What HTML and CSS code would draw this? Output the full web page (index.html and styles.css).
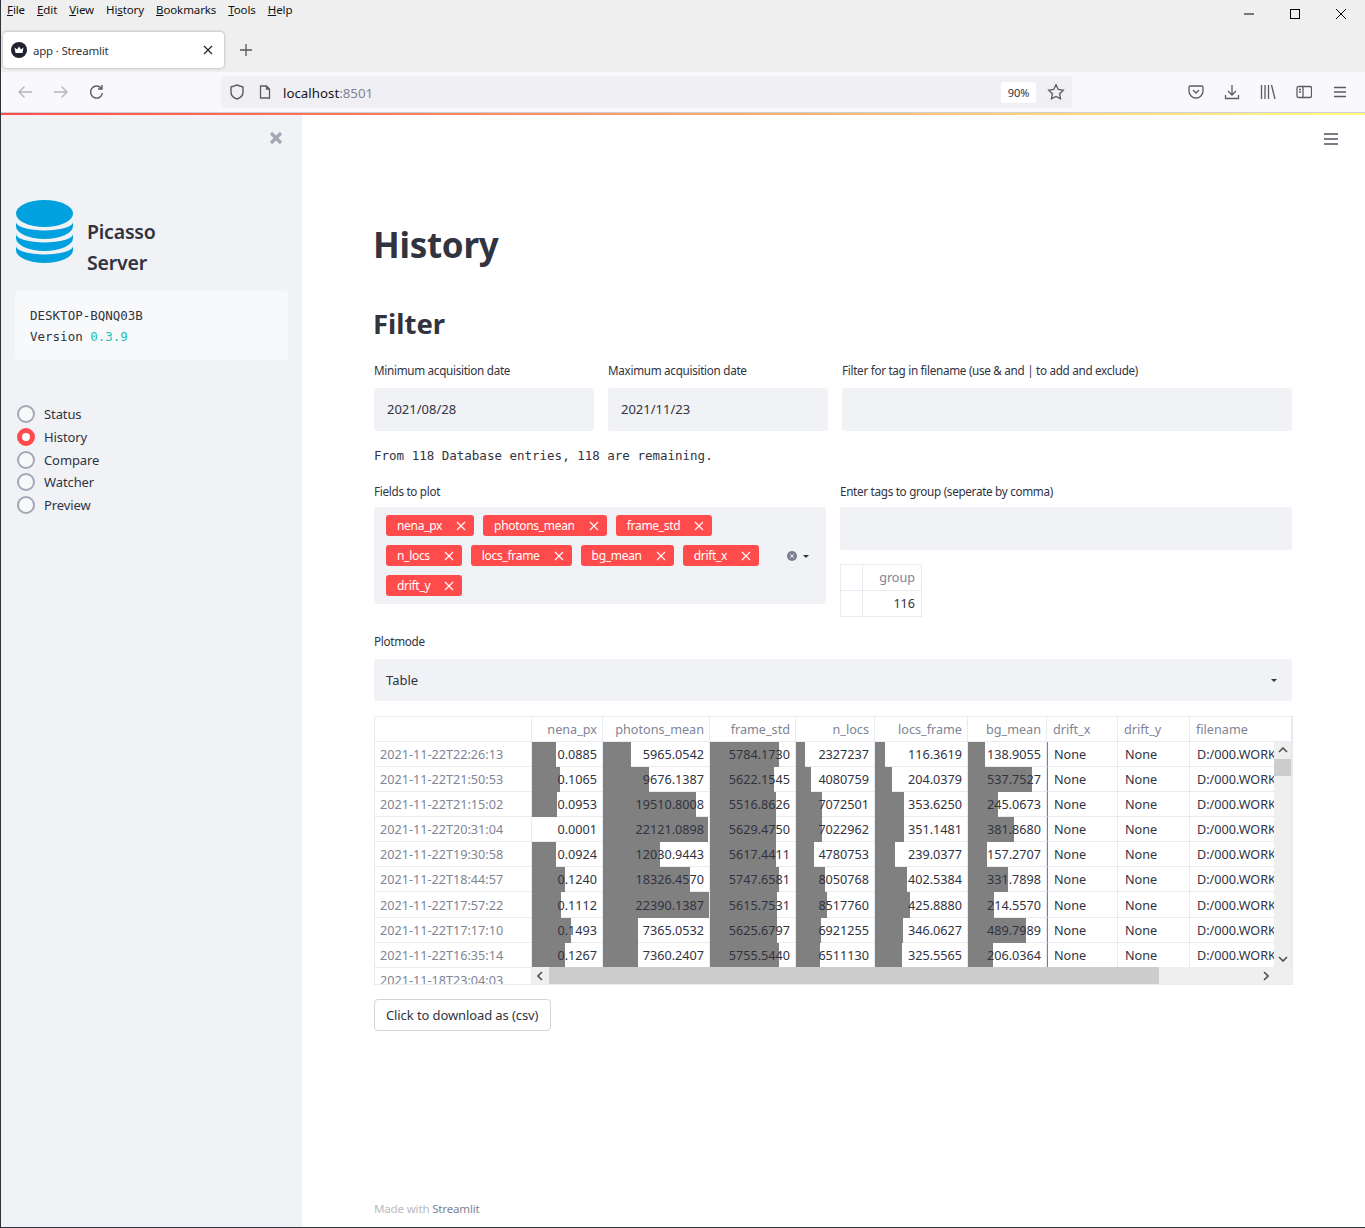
FILE: index.html
```html
<!DOCTYPE html>
<html lang="en">
<head>
    <meta charset="UTF-8">
    <title>app · Streamlit</title>
    <link rel="stylesheet" href="styles.css">
</head>
<body>
<div class="window">
    <!-- Browser chrome -->
    <div class="titlebar">
        <nav class="menu">
            <span><u>F</u>ile</span>
            <span><u>E</u>dit</span>
            <span><u>V</u>iew</span>
            <span>Hi<u>s</u>tory</span>
            <span><u>B</u>ookmarks</span>
            <span><u>T</u>ools</span>
            <span><u>H</u>elp</span>
        </nav>
        <div class="win-buttons">
            <svg width="12" height="12" viewBox="0 0 12 12"><path d="M1 6h10" stroke="#000" fill="none"/></svg>
            <svg width="12" height="12" viewBox="0 0 12 12"><rect x="1.5" y="1.5" width="9" height="9" stroke="#000" fill="none"/></svg>
            <svg width="12" height="12" viewBox="0 0 12 12"><path d="M1 1l10 10M11 1L1 11" stroke="#000" fill="none"/></svg>
        </div>
    </div>
    <div class="tabbar">
        <div class="tab">
            <svg class="favicon" width="16" height="16" viewBox="0 0 16 16"><circle cx="8" cy="8" r="8" fill="#20232f"/><path d="M3.5 5.5l2.500 2 2-3 2 3 2.500-2-1 5.500h-7z" fill="#fff"/></svg>
            <span class="tab-title">app · Streamlit</span>
            <svg width="10" height="10" viewBox="0 0 10 10"><path d="M1 1l8 8M9 1L1 9" stroke="#222" stroke-width="1.200" fill="none"/></svg>
        </div>
        <svg class="new-tab" width="14" height="14" viewBox="0 0 14 14"><path d="M7 1v12M1 7h12" stroke="#555" stroke-width="1.300" fill="none"/></svg>
    </div>
    <div class="toolbar">
        <div class="nav-icons">
            <svg width="16" height="16" viewBox="0 0 16 16"><path d="M15 8H2M7.500 2.500L2 8l5.500 5.500" stroke="#b4b4b8" stroke-width="1.300" fill="none"/></svg>
            <svg width="16" height="16" viewBox="0 0 16 16"><path d="M1 8h13M8.500 2.500L14 8l-5.500 5.500" stroke="#b4b4b8" stroke-width="1.300" fill="none"/></svg>
            <svg width="16" height="16" viewBox="0 0 16 16"><path d="M13.500 9a6 6 0 1 1-1.500-5M13 1v4H9" stroke="#5b5b66" stroke-width="1.400" fill="none"/></svg>
        </div>
        <div class="urlbar">
            <svg class="shield" width="16" height="16" viewBox="0 0 16 16"><path d="M8 1l6 2v5c0 3.500-3 6-6 7-3-1-6-3.500-6-7V3z" stroke="#5b5b66" stroke-width="1.400" fill="none"/></svg>
            <svg class="page" width="14" height="14" viewBox="0 0 14 14"><path d="M2.500 1h6l3 3v9h-9zM8.500 1v3h3" stroke="#5b5b66" stroke-width="1.300" fill="none"/></svg>
            <span class="url">localhost<span class="url-port">:8501</span></span>
            <span class="zoom-pill">90%</span>
            <svg class="star" width="18" height="18" viewBox="0 0 18 18"><path d="M9 1.800l2.200 4.700 5.100.7-3.700 3.500.9 5.100L9 13.400l-4.500 2.400.9-5.100-3.700-3.500 5.100-.7z" stroke="#5b5b66" stroke-width="1.300" fill="none"/></svg>
        </div>
        <div class="tool-icons">
            <svg width="16" height="16" viewBox="0 0 16 16"><path d="M2.500 2h11A1.500 1.500 0 0 1 15 3.500V7a7 7 0 0 1-14 0V3.500A1.500 1.500 0 0 1 2.500 2zM5 6l3 3 3-3" stroke="#5b5b66" stroke-width="1.300" fill="none"/></svg>
            <svg width="16" height="16" viewBox="0 0 16 16"><path d="M8 1v9.500M4 7l4 4 4-4M1.500 11v3.500h13V11" stroke="#5b5b66" stroke-width="1.300" fill="none"/></svg>
            <svg width="16" height="16" viewBox="0 0 16 16"><path d="M1.500 1v14M5 1v14M8.500 1v14M11.500 1l3.500 14" stroke="#5b5b66" stroke-width="1.300" fill="none"/></svg>
            <svg width="16" height="16" viewBox="0 0 16 16"><rect x="1" y="2.500" width="14.500" height="11" rx="1.500" stroke="#5b5b66" stroke-width="1.300" fill="none"/><path d="M7 2.500v11M3 5.500h2M3 8h2" stroke="#5b5b66" stroke-width="1.300" fill="none"/></svg>
            <svg width="16" height="16" viewBox="0 0 16 16"><path d="M2 3.500h12M2 8h12M2 12.500h12" stroke="#5b5b66" stroke-width="1.300" fill="none"/></svg>
        </div>
    </div>
    <div class="decoration"></div>

    <div class="app">
        <!-- Sidebar -->
        <aside class="sidebar">
            <svg class="side-close" width="14" height="14" viewBox="0 0 14 14"><path d="M2 2l10 10M12 2L2 12" stroke="#a3a8b4" stroke-width="3.200" fill="none"/></svg>
            <div class="brand">
                <svg class="logo" width="57" height="63" viewBox="0 0 57 63">
                    <ellipse cx="28.500" cy="13.500" rx="28.500" ry="13.500" fill="#00a1de"/>
                    <path d="M0 22A28.500 8.500 0 0 0 57 22V26A28.500 13 0 0 1 0 26z" fill="#00a1de"/>
                    <path d="M0 34A28.500 8.500 0 0 0 57 34V38A28.500 13 0 0 1 0 38z" fill="#00a1de"/>
                    <path d="M0 46A28.500 8.500 0 0 0 57 46V50A28.500 13 0 0 1 0 50z" fill="#00a1de"/>
                </svg>
                <div class="brand-name">Picasso<br>Server</div>
            </div>
            <div class="info-box">
                <div>DESKTOP-BQNQ03B</div>
                <div>Version <span class="teal">0.3.9</span></div>
            </div>
            <ul class="radios">
                <li><span class="radio"></span>Status</li>
                <li><span class="radio checked"></span>History</li>
                <li><span class="radio"></span>Compare</li>
                <li><span class="radio"></span>Watcher</li>
                <li><span class="radio"></span>Preview</li>
            </ul>
        </aside>

        <!-- Main content -->
        <main class="main">
            <svg class="main-menu" width="14" height="12" viewBox="0 0 14 12"><path d="M0 1h14M0 6h14M0 11h14" stroke="#50525e" stroke-width="1.700" fill="none"/></svg>

            <h1>History</h1>
            <h2>Filter</h2>

            <div class="filter-row">
                <div>
                    <label>Minimum acquisition date</label>
                    <div class="input">2021/08/28</div>
                </div>
                <div>
                    <label>Maximum acquisition date</label>
                    <div class="input">2021/11/23</div>
                </div>
                <div>
                    <label>Filter for tag in filename (use &amp; and | to add and exclude)</label>
                    <div class="input"></div>
                </div>
            </div>

            <p class="mono-line">From 118 Database entries, 118 are remaining.</p>

            <div class="fields-row">
                <div>
                    <label>Fields to plot</label>
                    <div class="multiselect">
                        <div class="chips">
                            <span class="chip">nena_px<svg width="10" height="10" viewBox="0 0 10 10"><path d="M1 1l8 8M9 1L1 9"/></svg></span>
                            <span class="chip">photons_mean<svg width="10" height="10" viewBox="0 0 10 10"><path d="M1 1l8 8M9 1L1 9"/></svg></span>
                            <span class="chip">frame_std<svg width="10" height="10" viewBox="0 0 10 10"><path d="M1 1l8 8M9 1L1 9"/></svg></span>
                            <span class="chip">n_locs<svg width="10" height="10" viewBox="0 0 10 10"><path d="M1 1l8 8M9 1L1 9"/></svg></span>
                            <span class="chip">locs_frame<svg width="10" height="10" viewBox="0 0 10 10"><path d="M1 1l8 8M9 1L1 9"/></svg></span>
                            <span class="chip">bg_mean<svg width="10" height="10" viewBox="0 0 10 10"><path d="M1 1l8 8M9 1L1 9"/></svg></span>
                            <span class="chip">drift_x<svg width="10" height="10" viewBox="0 0 10 10"><path d="M1 1l8 8M9 1L1 9"/></svg></span>
                            <span class="chip">drift_y<svg width="10" height="10" viewBox="0 0 10 10"><path d="M1 1l8 8M9 1L1 9"/></svg></span>
                        </div>
                        <div class="multi-controls">
                            <svg width="10" height="10" viewBox="0 0 10 10"><circle cx="5" cy="5" r="5" fill="#7d808c"/><path d="M3.200 3.200l3.600 3.600M6.800 3.200L3.200 6.800" stroke="#f0f2f6" stroke-width="1" fill="none"/></svg>
                            <span class="caret"></span>
                        </div>
                    </div>
                </div>
                <div>
                    <label>Enter tags to group (seperate by comma)</label>
                    <div class="input"></div>
                    <table class="group-table">
                        <tr><th></th><th>group</th></tr>
                        <tr><th></th><td>116</td></tr>
                    </table>
                </div>
            </div>

            <label class="plot-label">Plotmode</label>
            <div class="input select">Table<span class="caret"></span></div>

            <div class="frame">
                <table class="data">
                    <colgroup>
                        <col class="c-idx"><col class="c-nena"><col class="c-phot"><col class="c-frame"><col class="c-nlocs"><col class="c-lf"><col class="c-bg"><col class="c-dx"><col class="c-dy"><col class="c-file">
                    </colgroup>
                    <thead>
                        <tr><th></th><th>nena_px</th><th>photons_mean</th><th>frame_std</th><th>n_locs</th><th>locs_frame</th><th>bg_mean</th><th class="left">drift_x</th><th class="left">drift_y</th><th class="left">filename</th></tr>
                    </thead>
                    <tbody>
                        <tr><th>2021-11-22T22:26:13</th><td class="bar" style="--w:24px">0.0885</td><td class="bar" style="--w:28px">5965.0542</td><td class="bar" style="--w:69px">5784.1730</td><td class="bar" style="--w:9px">2327237</td><td class="bar" style="--w:10px">116.3619</td><td class="bar" style="--w:17px">138.9055</td><td class="left zero">None</td><td class="left">None</td><td class="left">D:/000.WORK</td></tr>
                        <tr><th>2021-11-22T21:50:53</th><td class="bar" style="--w:28px">0.1065</td><td class="bar" style="--w:46px">9676.1387</td><td class="bar" style="--w:64px">5622.1545</td><td class="bar" style="--w:15px">4080759</td><td class="bar" style="--w:17px">204.0379</td><td class="bar" style="--w:64px">537.7527</td><td class="left zero">None</td><td class="left">None</td><td class="left">D:/000.WORK</td></tr>
                        <tr><th>2021-11-22T21:15:02</th><td class="bar" style="--w:25px">0.0953</td><td class="bar" style="--w:93px">19510.8008</td><td class="bar" style="--w:66px">5516.8626</td><td class="bar" style="--w:26px">7072501</td><td class="bar" style="--w:29px">353.6250</td><td class="bar" style="--w:30px">245.0673</td><td class="left zero">None</td><td class="left">None</td><td class="left">D:/000.WORK</td></tr>
                        <tr><th>2021-11-22T20:31:04</th><td class="bar" style="--w:0px">0.0001</td><td class="bar" style="--w:105px">22121.0898</td><td class="bar" style="--w:66px">5629.4750</td><td class="bar" style="--w:26px">7022962</td><td class="bar" style="--w:29px">351.1481</td><td class="bar" style="--w:46px">381.8680</td><td class="left zero">None</td><td class="left">None</td><td class="left">D:/000.WORK</td></tr>
                        <tr><th>2021-11-22T19:30:58</th><td class="bar" style="--w:24px">0.0924</td><td class="bar" style="--w:57px">12030.9443</td><td class="bar" style="--w:66px">5617.4411</td><td class="bar" style="--w:18px">4780753</td><td class="bar" style="--w:20px">239.0377</td><td class="bar" style="--w:19px">157.2707</td><td class="left zero">None</td><td class="left">None</td><td class="left">D:/000.WORK</td></tr>
                        <tr><th>2021-11-22T18:44:57</th><td class="bar" style="--w:33px">0.1240</td><td class="bar" style="--w:87px">18326.4570</td><td class="bar" style="--w:69px">5747.6581</td><td class="bar" style="--w:29px">8050768</td><td class="bar" style="--w:32px">402.5384</td><td class="bar" style="--w:40px">331.7898</td><td class="left zero">None</td><td class="left">None</td><td class="left">D:/000.WORK</td></tr>
                        <tr><th>2021-11-22T17:57:22</th><td class="bar" style="--w:29px">0.1112</td><td class="bar" style="--w:106px">22390.1387</td><td class="bar" style="--w:67px">5615.7531</td><td class="bar" style="--w:31px">8517760</td><td class="bar" style="--w:35px">425.8880</td><td class="bar" style="--w:26px">214.5570</td><td class="left zero">None</td><td class="left">None</td><td class="left">D:/000.WORK</td></tr>
                        <tr><th>2021-11-22T17:17:10</th><td class="bar" style="--w:39px">0.1493</td><td class="bar" style="--w:35px">7365.0532</td><td class="bar" style="--w:67px">5625.6797</td><td class="bar" style="--w:25px">6921255</td><td class="bar" style="--w:28px">346.0627</td><td class="bar" style="--w:58px">489.7989</td><td class="left zero">None</td><td class="left">None</td><td class="left">D:/000.WORK</td></tr>
                        <tr><th>2021-11-22T16:35:14</th><td class="bar" style="--w:33px">0.1267</td><td class="bar" style="--w:35px">7360.2407</td><td class="bar" style="--w:69px">5755.5440</td><td class="bar" style="--w:24px">6511130</td><td class="bar" style="--w:27px">325.5565</td><td class="bar" style="--w:25px">206.0364</td><td class="left zero">None</td><td class="left">None</td><td class="left">D:/000.WORK</td></tr>
                        <tr><th>2021-11-18T23:04:03</th><td colspan="9"></td></tr>
                    </tbody>
                </table>
                <!-- Scrollbars sit over the table -->
                <div class="scroll-v">
                    <svg width="10" height="6" viewBox="0 0 10 6"><path d="M1 5l4-4 4 4" stroke="#505050" stroke-width="1.600" fill="none"/></svg>
                    <span class="thumb-v"></span>
                    <svg width="10" height="6" viewBox="0 0 10 6"><path d="M1 1l4 4 4-4" stroke="#505050" stroke-width="1.600" fill="none"/></svg>
                </div>
                <div class="scroll-h">
                    <svg width="6" height="10" viewBox="0 0 6 10"><path d="M5 1L1 5l4 4" stroke="#505050" stroke-width="1.600" fill="none"/></svg>
                    <span class="thumb-h"></span>
                    <svg width="6" height="10" viewBox="0 0 6 10"><path d="M1 1l4 4-4 4" stroke="#505050" stroke-width="1.600" fill="none"/></svg>
                </div>
            </div>

            <button class="download">Click to download as (csv)</button>

            <footer class="made">Made with <span>Streamlit</span></footer>
        </main>
    </div>
</div>
</body>
</html>
```

FILE: styles.css
```css
* {
    box-sizing: border-box;
}

body {
    margin: 0;
    font-family: "Noto Sans", sans-serif;
    color: #31333f;
    background: #fff;
}

.window {
    height: 1228px;
    display: flex;
    flex-direction: column;
    border-left: 1px solid #30323a;
    border-bottom: 1px solid #30323a;
    overflow: hidden;
}

svg {
    display: block;
    flex: none;
}

/* Browser chrome */
.titlebar {
    height: 21px;
    background: #efefef;
    display: flex;
    justify-content: space-between;
}

.menu {
    display: flex;
    gap: 12px;
    padding: 1px 0 0 6px;
    font-size: 11.500px;
    line-height: 18px;
    letter-spacing: -0.1px;
    color: #111;
}

.win-buttons {
    display: flex;
    gap: 34px;
    padding: 8px 18px 0 0;
}

.tabbar {
    height: 51px;
    background: #efefef;
    display: flex;
    align-items: flex-start;
    padding: 11px 0 0 2px;
}

.tab {
    width: 221px;
    height: 36px;
    background: #fff;
    border-radius: 4px;
    box-shadow: 0 0 3px rgba(0, 0, 0, 0.35);
    display: flex;
    align-items: center;
    padding: 0 11px 0 8px;
    font-size: 11.500px;
}

.tab-title {
    flex: 1;
    margin-left: 6px;
    letter-spacing: -0.2px;
}

.new-tab {
    margin: 11px 0 0 15px;
}

.toolbar {
    height: 41px;
    background: #f9f9fb;
    border-bottom: 1px solid #cfcfd8;
    display: flex;
    align-items: center;
}

.nav-icons {
    width: 220px;
    display: flex;
    gap: 20px;
    padding-left: 16px;
}

.urlbar {
    width: 851px;
    height: 32px;
    background: #f0f0f4;
    border-radius: 4px;
    display: flex;
    align-items: center;
    padding-left: 8px;
    font-size: 13.300px;
}

.page {
    margin-left: 13px;
}

.url {
    flex: 1;
    margin-left: 11px;
    padding-top: 1px;
    color: #15141a;
}

.url-port {
    color: #83838c;
}

.zoom-pill {
    width: 35px;
    height: 21px;
    background: #fff;
    border-radius: 3px;
    font-size: 11px;
    line-height: 21px;
    text-align: center;
}

.star {
    margin: 0 7px 0 11px;
}

.tool-icons {
    display: flex;
    gap: 20px;
    padding-left: 116px;
}

.decoration {
    height: 2px;
    background: linear-gradient(90deg, #ff4b4b, #fffd80);
}

/* App layout */
.app {
    flex: 1;
    display: flex;
    min-height: 0;
}

.sidebar {
    width: 301px;
    flex: none;
    background: #f0f2f6;
    position: relative;
    padding: 85px 14px 0;
}

.side-close {
    position: absolute;
    top: 16px;
    left: 268px;
}

.brand {
    display: flex;
    align-items: flex-end;
    padding-left: 1px;
}

.logo {
    margin-bottom: 15px;
}

.brand-name {
    margin: 0 0 0 14px;
    font-size: 19.500px;
    font-weight: 600;
    line-height: 31px;
    letter-spacing: -0.2px;
    color: #31333f;
}

.info-box {
    height: 69px;
    margin-top: 13px;
    padding: 14px 15px;
    background: #f8f9fb;
    border-radius: 4px;
    font-family: "DejaVu Sans Mono", monospace;
    font-size: 12.500px;
    line-height: 21px;
}

.teal {
    color: #21c0b0;
}

.radios {
    list-style: none;
    margin: 43px 0 0;
    padding: 0 0 0 2px;
    font-size: 13px;
    letter-spacing: -0.1px;
}

.radios li {
    height: 22.700px;
    display: flex;
    align-items: center;
    gap: 9px;
}

.radio {
    width: 18px;
    height: 18px;
    border-radius: 50%;
    border: 2px solid #a3a8b4;
    background: #f8f9fb;
}

.radio.checked {
    border: 5.500px solid #ff4b4b;
    background: #fff;
}

.main {
    flex: 1;
    position: relative;
    padding: 108px 73px 0 72px;
    background: #fff;
    min-width: 0;
}

.main-menu {
    position: absolute;
    top: 18px;
    right: 27px;
}

h1 {
    margin: 0 0 0 -1px;
    font-size: 35px;
    line-height: 44px;
    font-weight: 700;
    letter-spacing: -0.3px;
}

h2 {
    margin: 39px 0 0 -1px;
    font-size: 27.500px;
    line-height: 36px;
    font-weight: 700;
}

label {
    display: block;
    height: 18px;
    font-size: 11.700px;
    line-height: 18px;
    letter-spacing: -0.3px;
    color: #31333f;
    white-space: nowrap;
}

.filter-row {
    display: grid;
    grid-template-columns: 220px 220px 1fr;
    gap: 14px;
    margin-top: 19px;
}

.input {
    height: 43px;
    margin-top: 9px;
    padding: 0 13px;
    background: #f0f2f6;
    border-radius: 3px;
    font-size: 13px;
    line-height: 43px;
}

.mono-line {
    margin: 15px 0 0;
    font-family: "DejaVu Sans Mono", monospace;
    font-size: 12.500px;
    line-height: 19px;
}

.fields-row {
    display: grid;
    grid-template-columns: 452px 452px;
    gap: 14px;
    margin-top: 17px;
}

.fields-row .input {
    margin-top: 7px;
}

.multiselect {
    height: 97px;
    margin-top: 7px;
    padding: 8px 0 0 12px;
    background: #f0f2f6;
    border-radius: 3px;
    display: flex;
}

.chips {
    width: 388px;
    display: flex;
    flex-wrap: wrap;
    align-content: flex-start;
    gap: 9px;
}

.chip {
    height: 21px;
    display: flex;
    align-items: center;
    padding: 0 8px 0 11px;
    background: #ff4b4b;
    border-radius: 3px;
    color: #fff;
    font-size: 12px;
    letter-spacing: -0.3px;
}

.chip svg {
    margin-left: 14px;
    stroke: #fff;
    stroke-width: 1.100;
    fill: none;
}

.multi-controls {
    display: flex;
    align-items: center;
    gap: 6px;
    height: 82px;
    padding-left: 13px;
}

.caret {
    width: 0;
    height: 0;
    border-left: 3.500px solid transparent;
    border-right: 3.500px solid transparent;
    border-top: 3.500px solid #31333f;
}

.group-table {
    margin-top: 14px;
    border-collapse: collapse;
    border: 1px solid #e6eaf1;
    font-size: 12.600px;
}

.group-table th,
.group-table td {
    height: 26px;
    border: 1px solid #e6eaf1;
    padding: 0 6px;
    text-align: right;
    font-weight: 400;
}

.group-table th:first-child {
    width: 22px;
}

.group-table tr:first-child th:last-child {
    width: 59px;
    color: #808495;
}

.plot-label {
    margin-top: 15px;
}

.select {
    display: flex;
    align-items: center;
    justify-content: space-between;
    margin-top: 9px;
    height: 42px;
    padding: 0 15px 0 12px;
}

/* Data table */
.frame {
    position: relative;
    height: 269px;
    margin: 15px -1px 0 0;
    overflow: hidden;
    border: 1px solid #e6eaf1;
}

.data {
    width: 917px;
    table-layout: fixed;
    border-collapse: separate;
    border-spacing: 0;
    font-size: 12.650px;
}

.c-idx { width: 157px; }
.c-nena { width: 71px; }
.c-phot { width: 107px; }
.c-frame { width: 86px; }
.c-nlocs { width: 79px; }
.c-lf { width: 93px; }
.c-bg { width: 79px; }
.c-dx { width: 71px; }
.c-dy { width: 72px; }
.c-file { width: 102px; }

.data th,
.data td {
    height: 25px;
    padding: 0 5px 0 6px;
    text-align: right;
    font-weight: 400;
    white-space: nowrap;
    overflow: hidden;
    border-right: 1px solid #e6eaf1;
    border-bottom: 1px solid #e6eaf1;
}

.data th {
    color: #808495;
}

.data tbody th {
    text-align: left;
    padding-left: 5px;
}

.data tbody tr:nth-child(7) th {
    height: 26px;
}

.data .left {
    text-align: left;
}

.data td.left {
    padding-left: 7px;
}

.data .bar {
    border-bottom: 0;
    padding-bottom: 1px;
    background:
        linear-gradient(#808080, #808080) 0 0 / var(--w) 100% no-repeat,
        linear-gradient(#e6eaf1, #e6eaf1) 0 100% / 100% 1px no-repeat;
}

.data td.zero {
    border-left: 1px solid #808080;
    padding-left: 6px;
}

.scroll-v {
    position: absolute;
    top: 25px;
    right: 1px;
    bottom: 17px;
    width: 17px;
    background: #efefef;
    display: flex;
    flex-direction: column;
    align-items: center;
    justify-content: space-between;
    padding: 5px 0;
}

.thumb-v {
    position: absolute;
    top: 17px;
    left: 0;
    width: 17px;
    height: 17px;
    background: #cdcdcd;
}

.scroll-h {
    position: absolute;
    left: 157px;
    right: 0;
    bottom: 0;
    height: 17px;
    background: #efefef;
    display: flex;
    align-items: center;
    justify-content: space-between;
    padding: 0 23px 0 5px;
}

.thumb-h {
    position: absolute;
    left: 17px;
    top: 0;
    width: 610px;
    height: 17px;
    background: #cdcdcd;
}

.download {
    display: block;
    height: 32px;
    margin-top: 14px;
    padding: 0 12px 0 11px;
    background: #fff;
    border: 1px solid #d3d5da;
    border-radius: 4px;
    font-family: inherit;
    font-size: 13px;
    letter-spacing: -0.1px;
    color: #31333f;
}

.made {
    margin-top: 170px;
    font-size: 11.600px;
    letter-spacing: -0.2px;
    color: #b9bac0;
}

.made span {
    color: #808495;
}
```
